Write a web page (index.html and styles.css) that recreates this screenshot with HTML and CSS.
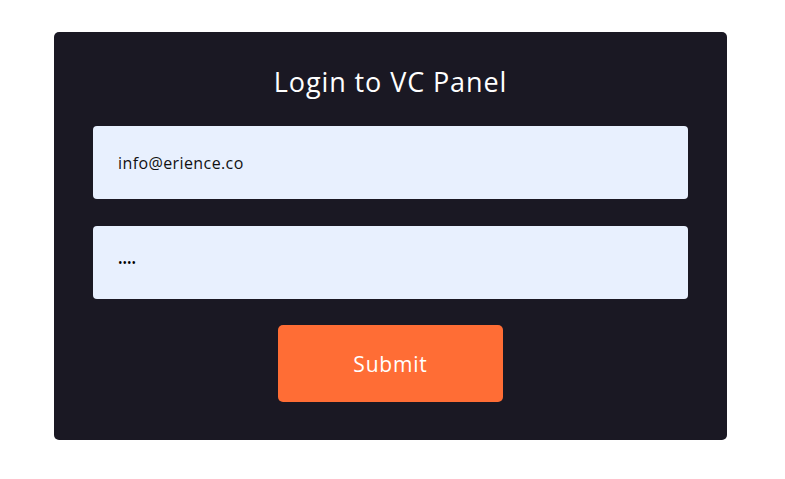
FILE: index.html
```html
<!DOCTYPE html>
<html lang="en">
<head>
<meta charset="utf-8">
<title>Login to VC Panel</title>
<link rel="stylesheet" href="styles.css">
</head>
<body>
<main class="page">
  <form class="panel">
    <h1 class="title">Login to VC Panel</h1>
    <input class="field" type="text" value="info@erience.co">
    <input class="field field-password" type="password" value="1234">
    <button class="submit" type="button">Submit</button>
  </form>
</main>
</body>
</html>
```
FILE: styles.css
```css
html, body {
  margin: 0;
  padding: 0;
  background: #ffffff;
}
.page {
  padding: 32px 0 0 54px;
}
.panel {
  box-sizing: border-box;
  width: 673px;
  height: 408px;
  background: #1a1823;
  border-radius: 5px;
  padding: 33px 39px 38px;
  display: flex;
  flex-direction: column;
  align-items: stretch;
  font-family: "Open Sans", "DejaVu Sans", sans-serif;
}
.title {
  margin: 0 0 27px;
  height: 34px;
  line-height: 34px;
  font-size: 27px;
  font-weight: 400;
  letter-spacing: 0.9px;
  color: #ffffff;
  text-align: center;
}
.field {
  box-sizing: border-box;
  height: 73px;
  border: none;
  outline: none;
  border-radius: 4px;
  background: #e8f0fe;
  padding: 0 25px;
  font-family: inherit;
  font-size: 16px;
  letter-spacing: 0.4px;
  color: #111;
  margin: 0 0 27px;
}
.field-password {
  font-size: 12px;
  letter-spacing: 0;
  color: #000;
  margin-bottom: 26px;
}
.submit {
  align-self: center;
  width: 225px;
  height: 77px;
  border: none;
  border-radius: 5px;
  background: #ff6d35;
  color: #ffffff;
  font-family: inherit;
  font-size: 21px;
  letter-spacing: 0.8px;
  cursor: pointer;
}
```
